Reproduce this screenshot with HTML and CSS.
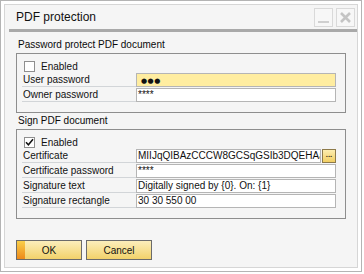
FILE: index.html
```html
<!DOCTYPE html>
<html lang="en">
<head>
    <meta charset="UTF-8">
    <title>PDF protection</title>
    <link rel="stylesheet" href="styles.css">
</head>
<body>
    <div class="window">
        <div class="frame">
            <div class="titlebar">
                <div class="title">PDF protection</div>
                <div class="title-btn">
                    <svg width="17" height="17" viewBox="0 0 17 17"><rect x="3" y="12" width="11" height="2" fill="#cfcfcf"/></svg>
                </div>
                <div class="title-btn">
                    <svg width="17" height="17" viewBox="0 0 17 17"><path d="M4 4 L13 13 M13 4 L4 13" stroke="#c4c4c4" stroke-width="2.6"/></svg>
                </div>
            </div>
            <div class="title-rule"></div>

            <div class="content">
                <div class="group-label">Password protect PDF document</div>
                <div class="group">
                    <div class="check-row">
                        <span class="checkbox"></span>
                        <span>Enabled</span>
                    </div>
                    <div class="field-row">
                        <div class="field-label">User password</div>
                        <div class="field-input focused"><span class="dots">●●●</span></div>
                    </div>
                    <div class="field-row">
                        <div class="field-label">Owner password</div>
                        <div class="field-input">****</div>
                    </div>
                </div>

                <div class="group-label second">Sign PDF document</div>
                <div class="group">
                    <div class="check-row">
                        <span class="checkbox">
                            <svg width="9" height="9" viewBox="0 0 9 9"><path d="M1 4.2 L3.4 6.8 L8 1.2" stroke="#111" stroke-width="1.5" fill="none"/></svg>
                        </span>
                        <span>Enabled</span>
                    </div>
                    <div class="field-row">
                        <div class="field-label">Certificate</div>
                        <div class="field-input short">MIIJqQIBAzCCCW8GCSqGSIb3DQEHAa</div>
                        <div class="browse">...</div>
                    </div>
                    <div class="field-row">
                        <div class="field-label">Certificate password</div>
                        <div class="field-input">****</div>
                    </div>
                    <div class="field-row">
                        <div class="field-label">Signature text</div>
                        <div class="field-input">Digitally signed by {0}. On: {1}</div>
                    </div>
                    <div class="field-row">
                        <div class="field-label">Signature rectangle</div>
                        <div class="field-input">30 30 550 00</div>
                    </div>
                </div>

                <div class="buttons">
                    <button class="btn primary">OK</button>
                    <button class="btn">Cancel</button>
                </div>
            </div>
        </div>
    </div>
</body>
</html>
```

FILE: styles.css
```css
* {
    box-sizing: border-box;
}

body {
    margin: 0;
    background-color: #ffffff;
    font-family: 'Liberation Sans', Arial, sans-serif;
    font-size: 10px;
    color: #111;
}

.window {
    width: 362px;
    height: 272px;
    border: 1px solid #b4b4b4;
    padding: 3px;
    background-color: #ffffff;
}

.frame {
    height: 100%;
    border: 1px solid #d6d6d6;
    background-color: #f5f5f5;
}

.titlebar {
    display: flex;
    height: 24px;
    padding: 0 2px 0 11px;
}

.title {
    flex: 1;
    font-size: 12px;
    line-height: 24px;
    color: #111;
}

.title-btn {
    width: 19px;
    height: 19px;
    margin-top: 3px;
    margin-left: 3px;
    border: 1px solid #d9d9d9;
    background-color: #f7f7f7;
}

.title-btn svg {
    display: block;
}

.title-rule {
    height: 3px;
    margin-left: 4px;
    background-color: #a9a9a9;
}

.content {
    padding: 6px 11px 0;
}

.group-label {
    line-height: 14px;
    margin-bottom: 1px;
    padding-left: 2px;
    color: #0a0a0a;
}

.group-label.second {
    margin-top: 1px;
}

.group {
    border: 1px solid #8e8e8e;
    padding: 7px 9px 10px 5px;
}

.check-row {
    display: flex;
    align-items: center;
    gap: 6px;
    height: 11px;
    margin: 0 0 1px 2px;
    line-height: 11px;
}

.checkbox {
    width: 11px;
    height: 11px;
    border: 1px solid #8f8f8f;
    background-color: #ffffff;
}

.checkbox svg {
    display: block;
}

.field-row {
    display: flex;
    height: 14px;
    margin-bottom: 1px;
}

.field-row:last-child {
    margin-bottom: 0;
}

.field-label {
    width: 114px;
    padding-left: 1px;
    line-height: 13px;
    border-bottom: 1px solid #d2d5d8;
    white-space: nowrap;
}

.field-input {
    width: 200px;
    padding-left: 1px;
    line-height: 12px;
    border: 1px solid #b5b5b5;
    background-color: #ffffff;
    white-space: nowrap;
    overflow: hidden;
}

.field-input.focused {
    background-color: #ffeda0;
}

.field-input.short {
    width: 185px;
}

.dots {
    padding-left: 3px;
    font-family: 'DejaVu Sans', sans-serif;
    font-size: 7px;
    letter-spacing: 0.5px;
}

.browse {
    width: 14px;
    height: 14px;
    margin-left: 1px;
    border: 1px solid #8d7a4a;
    background: linear-gradient(#fcedb0, #f2cf63);
    font-size: 8px;
    line-height: 10px;
    text-align: center;
    font-weight: bold;
    color: #3a2a10;
    overflow: hidden;
}

.buttons {
    display: flex;
    gap: 4px;
    margin-top: 21px;
}

.btn {
    width: 66px;
    height: 20px;
    padding: 0;
    border: 1px solid #6b6b6b;
    background: linear-gradient(#fbeebb, #f2d26a);
    font-family: 'Liberation Sans', Arial, sans-serif;
    font-size: 10px;
    color: #111;
}

.btn.primary {
    background:
        linear-gradient(#f9cf4a, #ee8a1a) left / 8px 100% no-repeat,
        linear-gradient(#fbeebb, #f2d26a);
}
```
